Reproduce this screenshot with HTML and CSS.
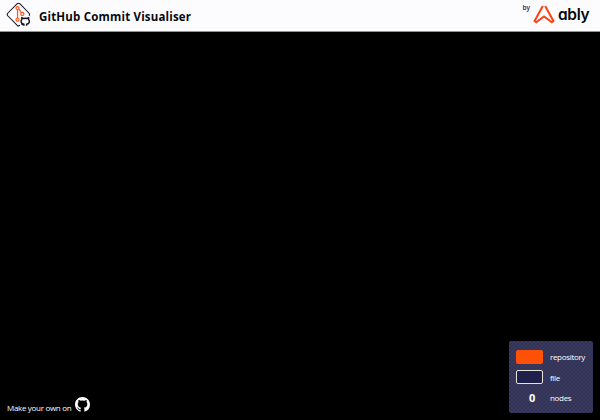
FILE: index.html
```html
<!DOCTYPE html>
<html lang="en">
<head>
<meta charset="utf-8">
<title>GitHub Commit Visualiser</title>
<link rel="stylesheet" href="styles.css">
</head>
<body>
<header class="header">
  <svg class="commit-icon" viewBox="0 0 26 26" fill="none">
    <path d="M14.5 24.2Q13 25.4 11.7 24.4L1.8 14.3Q.7 13 1.8 11.7L11.7 1.8Q13 .7 14.3 1.8L24 11.7Q25 13 24 14.3" stroke="#141428" stroke-width="1.1"/>
    <g stroke="#ff5a1c" stroke-width="1.3"><path d="M12 8v9M13.3 7.5l3.2 4"/><circle cx="12" cy="6.3" r="1.6"/><circle cx="17" cy="12.5" r="1.6"/><circle cx="12" cy="18.5" r="1.6"/></g>
    <path d="M18.6 24.6v-1.4c-3.2-.5-3.6-3.6-2.1-5v-1.8l1.9.8q1.6-.4 3.2 0l1.9-.8v1.8c1.5 1.4 1.1 4.500-2.100 5v1.4M18.600 23.500h-1.500l-1.200-1.200" stroke="#141428" stroke-width="1.500"/>
  </svg>
  <h1 class="title">GitHub Commit Visualiser</h1>
  <div class="brand">
    <span class="by">by</span>
    <svg class="brand-mark" viewBox="0 0 22 19" fill="none" stroke="#ff4013" stroke-width="2">
      <path d="M9.8 1L1.6 16L3.2 17.2L11 11.4L18.8 17.2L20.4 16L12.2 1"/>
    </svg>
    <span class="brand-name">ably</span>
  </div>
</header>
<main class="stage">
  <div class="make">
    <span>Make your own on</span>
    <svg class="github" viewBox="0 0 16 16" fill="#fff"><path d="M8 0C3.58 0 0 3.58 0 8c0 3.54 2.29 6.53 5.47 7.59.4.07.55-.17.55-.38 0-.19-.01-.82-.01-1.49-2.01.37-2.53-.49-2.69-.94-.09-.23-.48-.94-.82-1.13-.28-.15-.68-.52-.01-.53.63-.01 1.08.58 1.23.82.72 1.21 1.87.87 2.33.66.07-.52.28-.87.51-1.07-1.78-.2-3.64-.89-3.64-3.95 0-.87.31-1.59.82-2.15-.08-.2-.36-1.02.08-2.12 0 0 .67-.21 2.2.82a7.4 7.4 0 0 1 4 0c1.53-1.04 2.2-.82 2.2-.82.44 1.1.16 1.92.08 2.12.51.56.82 1.27.82 2.15 0 3.07-1.87 3.75-3.65 3.95.29.25.54.73.54 1.48 0 1.07-.01 1.93-.01 2.2 0 .21.15.46.55.38A8.01 8.01 0 0 0 16 8c0-4.42-3.58-8-8-8z"/></svg>
  </div>
  <dl class="legend">
    <dt class="swatch repo"></dt><dd>repository</dd>
    <dt class="swatch file"></dt><dd>file</dd>
    <dt class="count">0</dt><dd>nodes</dd>
  </dl>
</main>
</body>
</html>
```

FILE: styles.css
```css
* { box-sizing: border-box; }
body {
  margin: 0;
  height: 420px;
  display: flex;
  flex-direction: column;
  background: #000;
  font-family: "Open Sans", "Noto Sans", sans-serif;
  overflow: hidden;
}
.header {
  height: 32px;
  flex: none;
  display: flex;
  align-items: center;
  padding: 0 11px 1px 6px;
  background: #fcfcff;
  border-bottom: 1px solid #929298;
  color: #08080c;
}
.commit-icon { width: 25px; height: 25px; margin-top: -1px; }
.title {
  margin: 3px 0 0 8px;
  font-size: 11.5px;
  line-height: 16px;
  font-weight: 700;
  letter-spacing: .18px;
  white-space: nowrap;
}
.brand { display: flex; align-items: center; margin-left: auto; }
.by { font-size: 6.5px; line-height: 8px; font-weight: 600; margin: -15px 3px 0 0; color: #20204c; }
.brand-mark { width: 22px; height: 19px; margin: -1px 3px 0 0; }
.brand-name {
  width: 31px;
  font: 600 15.5px/18px Inter, sans-serif;
  font-feature-settings: "cv11";
  letter-spacing: -.35px;
  margin-top: -1px;
}
.stage {
  flex: 1;
  display: flex;
  justify-content: space-between;
  align-items: flex-end;
  padding: 0 7px 7px;
  color: #fff;
}
.make { display: flex; align-items: center; margin-bottom: -2px; font-size: 8px; line-height: 14px; letter-spacing: -.31px; }
.make span { width: 68px; margin-top: 7px; white-space: nowrap; }
.github { width: 15px; height: 15px; }
.legend {
  margin: 0;
  width: 84px;
  height: 72px;
  padding: 6px 7px 5px;
  display: grid;
  grid-template-columns: 27px 1fr;
  grid-template-rows: 19px 22px 19px;
  column-gap: 7px;
  align-items: center;
  border-radius: 2px;
  background: repeating-conic-gradient(#303064 0 25%, #3c3c50 0 50%) 0 0 / 4px 4px;
  font-size: 8px;
  line-height: 12px;
  letter-spacing: -.32px;
}
.legend dd { margin: 1px 0 0; }
.swatch { height: 14px; border-radius: 2px; }
.repo { background: #ff5008; }
.file { border: 1px solid #e8e4dc; background: #20204c; }
.count { text-align: center; font-size: 11px; font-weight: 700; padding-left: 5px; }
```
